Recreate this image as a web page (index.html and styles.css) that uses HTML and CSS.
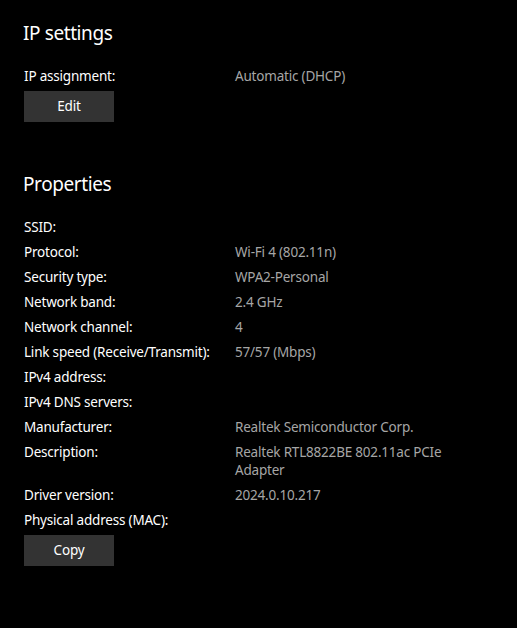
FILE: index.html
```html
<!DOCTYPE html>
<html lang="en">
<head>
<meta charset="utf-8">
<title>Wi-Fi properties</title>
<link rel="stylesheet" href="styles.css">
</head>
<body>
<main class="page">
  <section class="section">
    <h2 class="heading">IP settings</h2>
    <div class="list">
      <div class="row"><span class="label">IP assignment:</span><span class="value">Automatic (DHCP)</span></div>
    </div>
    <button class="btn" type="button">Edit</button>
  </section>
  <section class="section section-props">
    <h2 class="heading">Properties</h2>
    <div class="list">
      <div class="row"><span class="label">SSID:</span><span class="value"></span></div>
      <div class="row"><span class="label">Protocol:</span><span class="value">Wi-Fi 4 (802.11n)</span></div>
      <div class="row"><span class="label">Security type:</span><span class="value">WPA2-Personal</span></div>
      <div class="row"><span class="label">Network band:</span><span class="value">2.4 GHz</span></div>
      <div class="row"><span class="label">Network channel:</span><span class="value">4</span></div>
      <div class="row"><span class="label">Link speed (Receive/Transmit):</span><span class="value">57/57 (Mbps)</span></div>
      <div class="row"><span class="label">IPv4 address:</span><span class="value"></span></div>
      <div class="row"><span class="label">IPv4 DNS servers:</span><span class="value"></span></div>
      <div class="row"><span class="label">Manufacturer:</span><span class="value">Realtek Semiconductor Corp.</span></div>
      <div class="row"><span class="label">Description:</span><span class="value">Realtek RTL8822BE 802.11ac PCIe Adapter</span></div>
      <div class="row"><span class="label">Driver version:</span><span class="value">2024.0.10.217</span></div>
      <div class="row"><span class="label">Physical address (MAC):</span><span class="value"></span></div>
    </div>
    <button class="btn" type="button">Copy</button>
  </section>
</main>
</body>
</html>
```

FILE: styles.css
```css
html, body {
  margin: 0;
  padding: 0;
  background: #000;
}

body {
  width: 517px;
  height: 628px;
  overflow: hidden;
  font-family: "Noto Sans", "Open Sans", sans-serif;
  color: #fff;
  font-size: 13.5px;
  letter-spacing: -0.2px;
}

.page {
  padding: 19px 24px 0 24px;
}

.section-props {
  margin-top: 48px;
}

.heading {
  margin: 0 0 0 -1px;
  font-size: 19px;
  font-weight: 400;
  letter-spacing: -0.4px;
  line-height: 28px;
  color: #fff;
}

.list {
  display: flex;
  flex-direction: column;
  gap: 7px;
  margin-top: 20px;
}

.section-props .list {
  margin-top: 20.5px;
}

.row {
  display: grid;
  grid-template-columns: 211px 222px;
  line-height: 18px;
}

.label {
  color: #fff;
}

.value {
  color: #a6a6a6;
}

.btn {
  display: block;
  margin-top: 5.5px;
  width: 90px;
  height: 31px;
  padding: 0;
  border: none;
  border-radius: 0;
  background: #333333;
  color: #fff;
  font-family: inherit;
  font-size: 13.5px;
  letter-spacing: -0.2px;
  line-height: 31px;
  text-align: center;
}
```
